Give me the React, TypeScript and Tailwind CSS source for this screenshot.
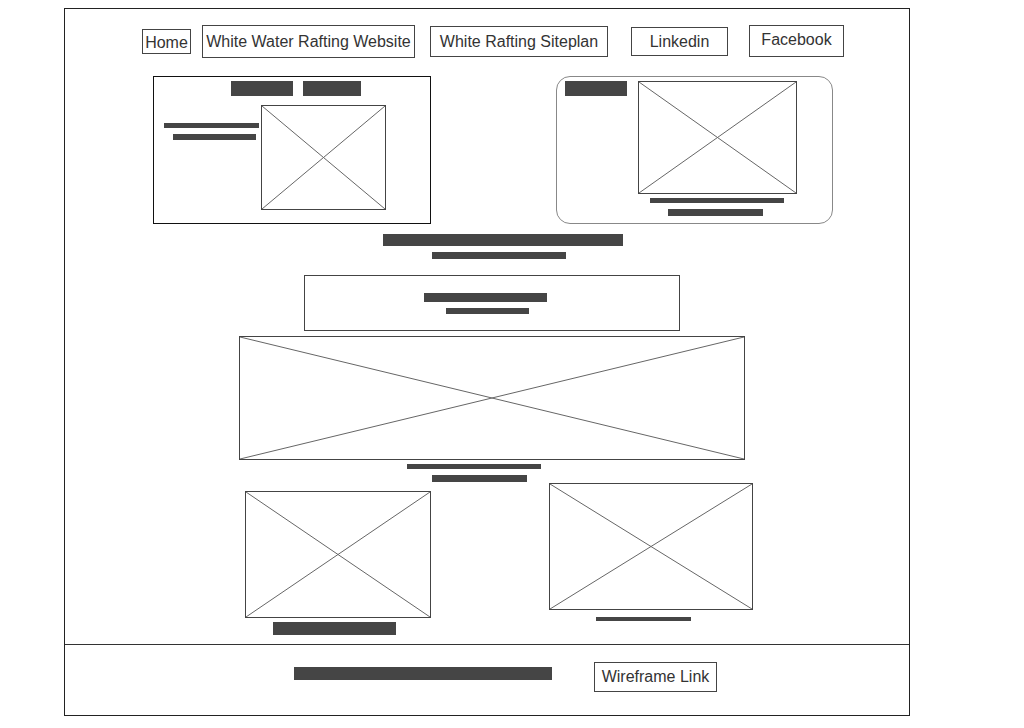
import type { ReactNode } from 'react';

const Bar = ({ className }: { className: string }) => (
    <div className={`bg-[#454545] shrink-0 ${className}`} />
);

// image placeholder: a box with an X drawn across it
const Placeholder = ({ className }: { className: string }) => (
    <div className={`relative shrink-0 border border-[#444] ${className}`}>
        <svg className="absolute inset-0 w-full h-full" viewBox="0 0 100 100" preserveAspectRatio="none">
            <line x1="0" y1="0" x2="100" y2="100" stroke="#666" strokeWidth="1" vectorEffect="non-scaling-stroke" />
            <line x1="100" y1="0" x2="0" y2="100" stroke="#666" strokeWidth="1" vectorEffect="non-scaling-stroke" />
        </svg>
    </div>
);

const NavButton = ({ children, className }: { children: ReactNode, className: string }) => (
    <div className={`shrink-0 flex items-center justify-center border border-[#444] text-[16px] text-[#333] leading-none whitespace-nowrap ${className}`}>
        {children}
    </div>
);

export default function App() {
    return (
        <div className="w-[1024px] h-[728px] bg-white overflow-hidden font-['Liberation_Sans',Arial,sans-serif]">
            <div className="ml-[64px] mt-[8px] w-[846px] h-[708px] border border-[#222] flex flex-col">
                <main className="h-[635px] flex flex-col">
                    {/* Nav */}
                    <div className="mt-[16px] h-[33px] flex items-start">
                        <NavButton className="ml-[77px] mt-[4px] w-[49px] h-[25px] pt-[3px]">Home</NavButton>
                        <NavButton className="ml-[11px] w-[213px] h-[33px]">White Water Rafting Website</NavButton>
                        <NavButton className="ml-[15px] mt-[1px] w-[178px] h-[31px]">White Rafting Siteplan</NavButton>
                        <NavButton className="ml-[23px] mt-[2px] w-[97px] h-[29px]">Linkedin</NavButton>
                        <NavButton className="ml-[21px] w-[95px] h-[32px] pb-[2px]">Facebook</NavButton>
                    </div>

                    {/* Feature cards */}
                    <div className="mt-[18px] flex items-start">
                        <div className="ml-[88px] w-[278px] h-[148px] border border-[#111] flex flex-col">
                            <div className="mt-[4px] flex">
                                <Bar className="ml-[77px] w-[62px] h-[15px]" />
                                <Bar className="ml-[10px] w-[58px] h-[15px]" />
                            </div>
                            <div className="mt-[9px] flex items-start">
                                <div className="w-[107px] flex flex-col">
                                    <Bar className="mt-[18px] ml-[10px] w-[95px] h-[5px]" />
                                    <Bar className="mt-[6px] ml-[19px] w-[83px] h-[6px]" />
                                </div>
                                <Placeholder className="w-[125px] h-[105px]" />
                            </div>
                        </div>

                        <div className="ml-[125px] w-[277px] h-[148px] border border-[#888] rounded-[14px] flex items-start">
                            <Bar className="ml-[8px] mt-[4px] w-[62px] h-[15px]" />
                            <div className="ml-[11px] mt-[4px] flex flex-col">
                                <Placeholder className="w-[159px] h-[113px]" />
                                <Bar className="mt-[4px] ml-[12px] w-[134px] h-[5px]" />
                                <Bar className="mt-[6px] ml-[30px] w-[95px] h-[7px]" />
                            </div>
                        </div>
                    </div>

                    <Bar className="mt-[10px] ml-[318px] w-[240px] h-[12px]" />
                    <Bar className="mt-[6px] ml-[367px] w-[134px] h-[7px]" />

                    <div className="mt-[16px] ml-[239px] w-[376px] h-[56px] border border-[#444] flex flex-col">
                        <Bar className="mt-[17px] ml-[119px] w-[123px] h-[9px]" />
                        <Bar className="mt-[6px] ml-[141px] w-[83px] h-[6px]" />
                    </div>

                    <Placeholder className="mt-[5px] ml-[174px] w-[506px] h-[124px]" />
                    <Bar className="mt-[4px] ml-[342px] w-[134px] h-[5px]" />
                    <Bar className="mt-[6px] ml-[367px] w-[95px] h-[7px]" />

                    {/* Gallery */}
                    <div className="mt-[1px] flex items-start">
                        <div className="ml-[180px] mt-[8px] flex flex-col">
                            <Placeholder className="w-[186px] h-[127px]" />
                            <Bar className="mt-[4px] ml-[28px] w-[123px] h-[13px]" />
                        </div>
                        <div className="ml-[118px] flex flex-col">
                            <Placeholder className="w-[204px] h-[127px]" />
                            <Bar className="mt-[7px] ml-[47px] w-[95px] h-[4px]" />
                        </div>
                    </div>
                </main>

                <footer className="h-[71px] border-t border-[#333] flex items-start">
                    <Bar className="mt-[22px] ml-[229px] w-[258px] h-[13px]" />
                    <NavButton className="mt-[17px] ml-[42px] w-[123px] h-[30px]">Wireframe Link</NavButton>
                </footer>
            </div>
        </div>
    );
}
